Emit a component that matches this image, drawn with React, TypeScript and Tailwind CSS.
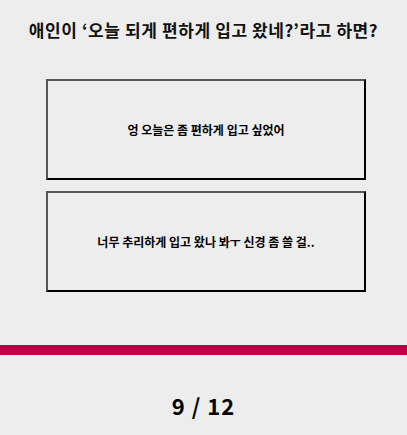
const answers = [
  '엉 오늘은 좀 편하게 입고 싶었어',
  '너무 추리하게 입고 왔나 봐ㅜ 신경 좀 쓸 걸..',
];

function AnswerBox({ text }: { text: string }) {
  return (
    <button className="flex h-[101px] w-[320px] items-center justify-center border-2 border-t-[#555555] border-l-[#555555] border-r-black border-b-black bg-[#ededed] text-[12px] font-bold text-black">
      {text}
    </button>
  );
}

export default function App() {
  return (
    <div
      className="flex h-[435px] w-full flex-col bg-[#ededed] text-black"
      style={{ fontFamily: '"Noto Sans CJK KR", "Noto Sans", sans-serif' }}
    >
      <h1 className="pt-[17px] text-center text-[17px] font-bold leading-[25px] tracking-[0.6px] text-[#111]">
        애인이 ‘오늘 되게 편하게 입고 왔네?’라고 하면?
      </h1>

      <div className="mt-[37px] flex flex-col gap-[11px] pl-[46px]">
        {answers.map((a) => (
          <AnswerBox key={a} text={a} />
        ))}
      </div>

      <div className="mt-[53px] h-[10px] w-full bg-[#b8004a]" />

      <div className="mt-[35px] text-center text-[22px] font-bold leading-[30px] tracking-[1px]">
        9 / 12
      </div>
    </div>
  );
}
